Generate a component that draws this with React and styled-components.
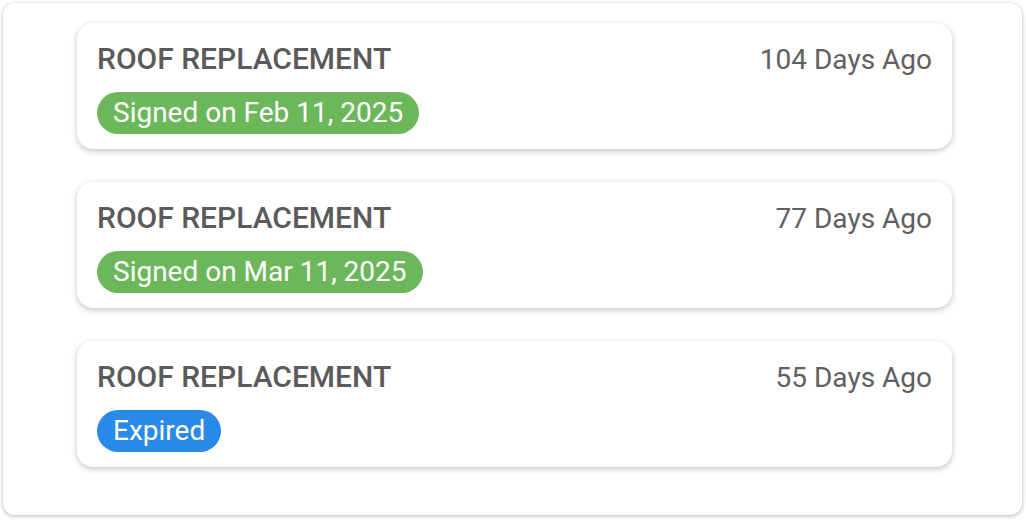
import React from 'react'
import styled, { createGlobalStyle } from 'styled-components'

const GlobalStyle = createGlobalStyle`
  html, body {
    margin: 0;
    padding: 0;
    background: #ffffff;
  }
  body {
    font-family: Roboto, "Liberation Sans", sans-serif;
  }
`

const contracts = [
  { title: 'ROOF REPLACEMENT', ago: '104 Days Ago', status: 'signed', label: 'Signed on Feb 11, 2025' },
  { title: 'ROOF REPLACEMENT', ago: '77 Days Ago', status: 'signed', label: 'Signed on Mar 11, 2025' },
  { title: 'ROOF REPLACEMENT', ago: '55 Days Ago', status: 'expired', label: 'Expired' },
]

function App() {
  return (
    <Page>
      <GlobalStyle />
      <Panel>
        {contracts.map((c, i) => (
          <Card key={i}>
            <TopRow>
              <Title>{c.title}</Title>
              <Ago>{c.ago}</Ago>
            </TopRow>
            <Badge status={c.status}>{c.label}</Badge>
          </Card>
        ))}
      </Panel>
    </Page>
  )
}

export default App

const Page = styled.div`
  padding: 3px 4px 7px 3px;
  box-sizing: border-box;
  width: 1026px;
  height: 522px;
`

const Panel = styled.div`
  box-sizing: border-box;
  height: 512px;
  background: #ffffff;
  border-radius: 12px;
  box-shadow: 0 1px 4px rgba(0, 0, 0, 0.3);
  padding: 20px 70px 0 74px;
  display: flex;
  flex-direction: column;
  gap: 33px;
`

const Card = styled.div`
  box-sizing: border-box;
  height: 126px;
  background: #ffffff;
  border-radius: 16px;
  box-shadow: 0 2px 6px rgba(0, 0, 0, 0.24);
  padding: 18px 20px 0 20px;
  display: flex;
  flex-direction: column;
  align-items: flex-start;
  gap: 14px;
`

const TopRow = styled.div`
  width: 100%;
  display: flex;
  justify-content: space-between;
  align-items: baseline;
  line-height: 36px;
`

const Title = styled.span`
  font-size: 30px;
  font-weight: 500;
  color: #5a5a5a;
`

const Ago = styled.span`
  font-size: 28px;
  font-weight: 400;
  color: #606060;
`

const Badge = styled.span`
  height: 42px;
  line-height: 42px;
  padding: 0 16px;
  border-radius: 21px;
  font-size: 28px;
  color: #ffffff;
  background: ${p => (p.status === 'expired' ? '#2a8ae8' : '#6cb75a')};
`
